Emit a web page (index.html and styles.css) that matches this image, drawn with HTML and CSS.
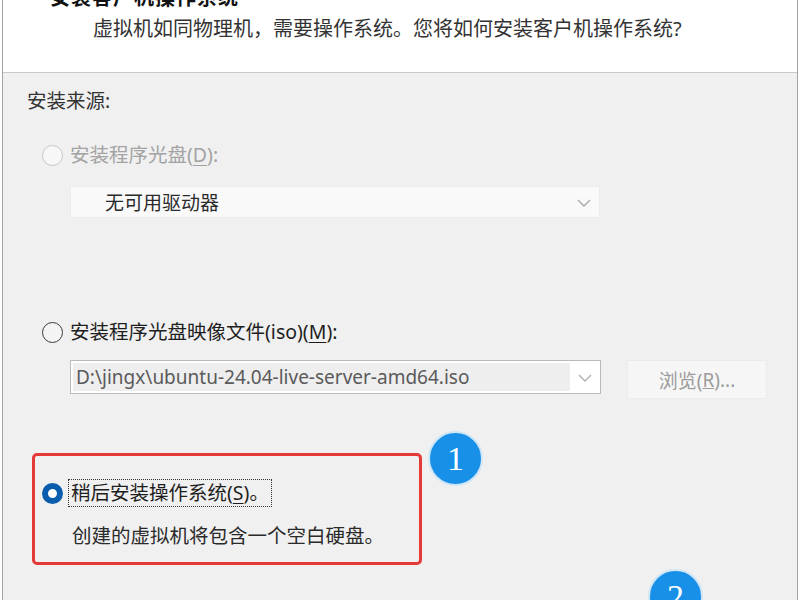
FILE: index.html
```html
<!DOCTYPE html>
<html lang="zh-CN">
<head>
<meta charset="utf-8">
<title>安装客户机操作系统</title>
<link rel="stylesheet" href="styles.css">
</head>
<body>
<div class="window">
  <header class="head">
    <div class="title">安装客户机操作系统</div>
    <div class="subtitle">虚拟机如同物理机，需要操作系统。您将如何安装客户机操作系统?</div>
  </header>
  <main class="content">
    <div class="group-label">安装来源:</div>

    <div class="option option-disc disabled">
      <span class="radio"></span>
      <span class="label">安装程序光盘(<u>D</u>):</span>
    </div>
    <div class="select select-disc">
      <span class="select-text">无可用驱动器</span>
      <span class="chev"><svg width="14" height="8" viewBox="0 0 14 8"><polyline points="1,1 7,7 13,1" fill="none" stroke="#a8a8a8" stroke-width="1.4"/></svg></span>
    </div>

    <div class="option option-iso">
      <span class="radio"></span>
      <span class="label">安装程序光盘映像文件(iso)(<u>M</u>):</span>
    </div>
    <div class="iso-row">
      <div class="select select-iso">
        <span class="select-text">D:\jingx\ubuntu-24.04-live-server-amd64.iso</span>
        <span class="chev"><svg width="14" height="8" viewBox="0 0 14 8"><polyline points="1,1 7,7 13,1" fill="none" stroke="#b0b0b0" stroke-width="1.4"/></svg></span>
      </div>
      <div class="button">浏览(<u>R</u>)...</div>
    </div>

    <div class="later-box">
      <div class="option option-later">
        <span class="radio checked"></span>
        <span class="label focus">稍后安装操作系统(<u>S</u>)。</span>
      </div>
      <div class="desc">创建的虚拟机将包含一个空白硬盘。</div>
    </div>
  </main>
  <div class="badge badge-1">1</div>
  <div class="badge badge-2">2</div>
</div>
</body>
</html>
```
FILE: styles.css
```css
html, body {
  margin: 0;
  padding: 0;
  background: #ffffff;
}
body {
  font-family: "Noto Sans", "Noto Sans CJK SC", sans-serif;
  color: #1e1e1e;
}
.window {
  position: relative;
  margin: 0 2px;
  height: 600px;
  border-left: 1px solid #a4a4a4;
  border-right: 1px solid #a4a4a4;
  background: #f0f0f0;
  overflow: hidden;
}
.head {
  background: #ffffff;
  height: 72px;
  border-bottom: 1px solid #c9c9c9;
  overflow: hidden;
}
.title {
  margin-top: -12px;
  padding-left: 47px;
  font-size: 20px;
  line-height: 20px;
  font-weight: bold;
  color: #111;
  letter-spacing: 1px;
}
.subtitle {
  margin-top: 8px;
  padding-left: 90px;
  font-size: 20px;
  line-height: 25px;
  color: #333;
}
.content {
  display: flex;
  flex-direction: column;
  align-items: flex-start;
}
.group-label {
  margin-top: 16px;
  margin-left: 24px;
  font-size: 19.5px;
  line-height: 24px;
  color: #333;
}
.option {
  display: flex;
  align-items: center;
  font-size: 19.5px;
  line-height: 24px;
}
.option-disc {
  margin-top: 30px;
  margin-left: 39px;
}
.option-iso {
  margin-top: 102px;
  margin-left: 39px;
}
.radio {
  box-sizing: border-box;
  width: 21px;
  height: 21px;
  border-radius: 50%;
  border: 1.5px solid #3a3a3a;
  background: #f4f4f4;
  margin-right: 7px;
  flex: none;
}
.disabled .radio {
  border-color: #c6c6c6;
  background: #f7f7f7;
}
.disabled .label {
  color: #a3a3a3;
}
.radio.checked {
  border: 6.5px solid #0a5cad;
  background: #ffffff;
  margin-right: 5px;
}
.label u {
  text-decoration-thickness: 1px;
  text-underline-offset: 3px;
}
.select {
  box-sizing: border-box;
  display: flex;
  align-items: center;
  font-size: 19px;
}
.select-disc {
  margin-top: 19px;
  margin-left: 67px;
  width: 530px;
  height: 32px;
  background: #f9f9f9;
  border: 1px solid #ececec;
  color: #2a2a2a;
}
.select-disc .select-text {
  flex: 1;
  padding-left: 34px;
}
.chev {
  width: 30px;
  display: flex;
  justify-content: center;
  align-items: center;
  flex: none;
  padding-top: 2px;
}
.iso-row {
  display: flex;
  align-items: flex-start;
  gap: 26px;
  margin-top: 16px;
  margin-left: 67px;
}
.select-iso {
  width: 531px;
  height: 34px;
  background: #ffffff;
  border: 1px solid #bababa;
  padding: 2px 0 2px 2px;
}
.select-iso .select-text {
  flex: 1;
  height: 100%;
  background: #eeeeee;
  color: #5a5a5a;
  padding-left: 3px;
  line-height: 28px;
  white-space: nowrap;
  overflow: hidden;
}
.button {
  box-sizing: border-box;
  width: 140px;
  height: 39px;
  background: #f6f6f6;
  border: 1px solid #ebebeb;
  color: #9c9c9c;
  font-size: 19px;
  display: flex;
  align-items: center;
  justify-content: center;
  padding-top: 1px;
}
.later-box {
  box-sizing: border-box;
  margin-top: 54px;
  margin-left: 29px;
  width: 390px;
  height: 112px;
  border: 3px solid #e53a3a;
  border-radius: 5px;
  padding: 23px 0 0 7px;
  display: flex;
  flex-direction: column;
  align-items: flex-start;
}
.label.focus {
  border: 1px dotted #333;
  padding: 1px 2px 1px 2px;
  line-height: 24px;
}
.desc {
  margin-top: 17px;
  margin-left: 30px;
  font-size: 19.5px;
  line-height: 24px;
  color: #2a2a2a;
}
.badge {
  position: absolute;
  box-sizing: border-box;
  width: 55px;
  height: 55px;
  border-radius: 50%;
  background: #1890e8;
  border: 2px solid #cfe6f8;
  color: #ffffff;
  font-family: "Liberation Serif", serif;
  font-size: 34px;
  line-height: 51px;
  text-align: center;
}
.badge-1 {
  left: 425px;
  top: 431px;
}
.badge-2 {
  left: 645px;
  top: 569px;
}
```
